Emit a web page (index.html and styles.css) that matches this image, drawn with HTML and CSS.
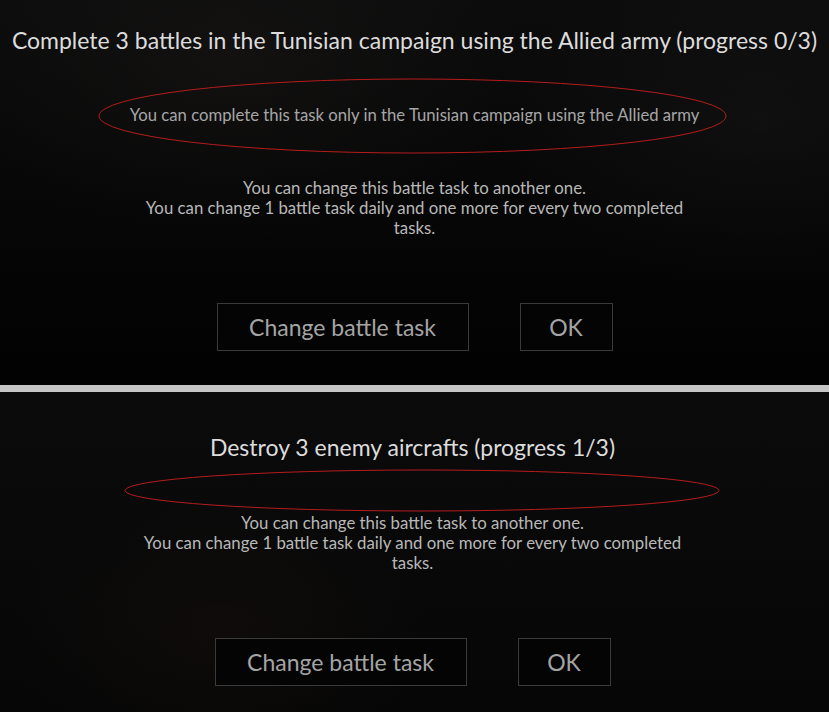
FILE: index.html
```html
<!DOCTYPE html>
<html lang="en">
<head>
<meta charset="utf-8">
<title>Battle task</title>
<link rel="stylesheet" href="styles.css">
</head>
<body>
<section class="panel panel-top">
  <h1 class="title">Complete 3 battles in the Tunisian campaign using the Allied army (progress 0/3)</h1>
  <div class="condition condition-top">
    <svg class="ring" width="629" height="76" viewBox="0 0 629 76"><ellipse cx="314.5" cy="38" rx="313.5" ry="37" fill="none" stroke="#b51c1c" stroke-width="1"/></svg>
    <p class="cond-text">You can complete this task only in the Tunisian campaign using the Allied army</p>
  </div>
  <p class="info">You can change this battle task to another one.<br>You can change 1 battle task daily and one more for every two completed tasks.</p>
  <div class="actions">
    <button class="btn btn-wide">Change battle task</button>
    <button class="btn btn-ok">OK</button>
  </div>
</section>
<div class="divider"></div>
<section class="panel panel-bottom">
  <h1 class="title">Destroy 3 enemy aircrafts (progress 1/3)</h1>
  <div class="condition condition-bottom">
    <svg class="ring" width="596" height="43" viewBox="0 0 596 43"><ellipse cx="298" cy="21.5" rx="297" ry="20.5" fill="none" stroke="#b51c1c" stroke-width="1"/></svg>
  </div>
  <p class="info">You can change this battle task to another one.<br>You can change 1 battle task daily and one more for every two completed tasks.</p>
  <div class="actions">
    <button class="btn btn-wide">Change battle task</button>
    <button class="btn btn-ok">OK</button>
  </div>
</section>
</body>
</html>
```
FILE: styles.css
```css
html, body {
  margin: 0;
  padding: 0;
  background: #070707;
}
body {
  width: 829px;
  height: 712px;
  overflow: hidden;
  font-family: Lato, "Open Sans", sans-serif;
}
.panel {
  display: flex;
  flex-direction: column;
  align-items: center;
  box-sizing: border-box;
}
.panel-top {
  height: 385px;
  padding-top: 26px;
  background:
    radial-gradient(ellipse 420px 260px at 230px 60px, rgba(34,30,28,0.35), rgba(0,0,0,0) 70%),
    radial-gradient(ellipse 380px 240px at 760px 120px, rgba(28,28,28,0.35), rgba(0,0,0,0) 70%),
    linear-gradient(#0c0c0c, #050505 65%, #020202);
}
.panel-bottom {
  height: 320px;
  padding-top: 41px;
  background:
    radial-gradient(ellipse 300px 200px at 220px 240px, rgba(28,20,16,0.35), rgba(0,0,0,0) 70%),
    linear-gradient(#0b0b0b, #080808 60%, #060606);
}
.divider {
  height: 7px;
  background: #c6c6c6;
}
.title {
  margin: 0;
  font-size: 23px;
  line-height: 28px;
  font-weight: 400;
  color: #dcdcdc;
  white-space: nowrap;
}
.panel-bottom .title {
  margin-right: 4px;
}
.condition {
  position: relative;
  display: flex;
  align-items: center;
  justify-content: center;
  align-self: stretch;
}
.condition-top {
  margin-top: 25px;
  height: 74px;
}
.condition-bottom {
  margin-top: 9px;
  height: 41px;
}
.ring {
  position: absolute;
  top: -1px;
}
.condition-top .ring { left: 98px; }
.condition-bottom .ring { left: 124px; }
.cond-text {
  margin: -2px 0 0;
  font-size: 16.7px;
  line-height: 20px;
  color: #a6a6a6;
  white-space: nowrap;
}
.info {
  margin: 25px 0 0;
  width: 560px;
  text-align: center;
  font-size: 16.8px;
  line-height: 20px;
  color: #b8b8b8;
}
.panel-bottom .info {
  margin-top: 2px;
  margin-right: 4px;
}
.actions {
  margin-top: 65px;
  display: flex;
  gap: 51px;
}
.panel-bottom .actions {
  margin-right: 4px;
}
.btn {
  height: 48px;
  box-sizing: border-box;
  border: 1px solid #3a3a3a;
  background: #040404;
  color: #a4a4a4;
  font-family: Lato, "Open Sans", sans-serif;
  font-size: 23px;
  padding: 0;
  cursor: pointer;
}
.btn-wide { width: 252px; }
.btn-ok { width: 93px; }
```
